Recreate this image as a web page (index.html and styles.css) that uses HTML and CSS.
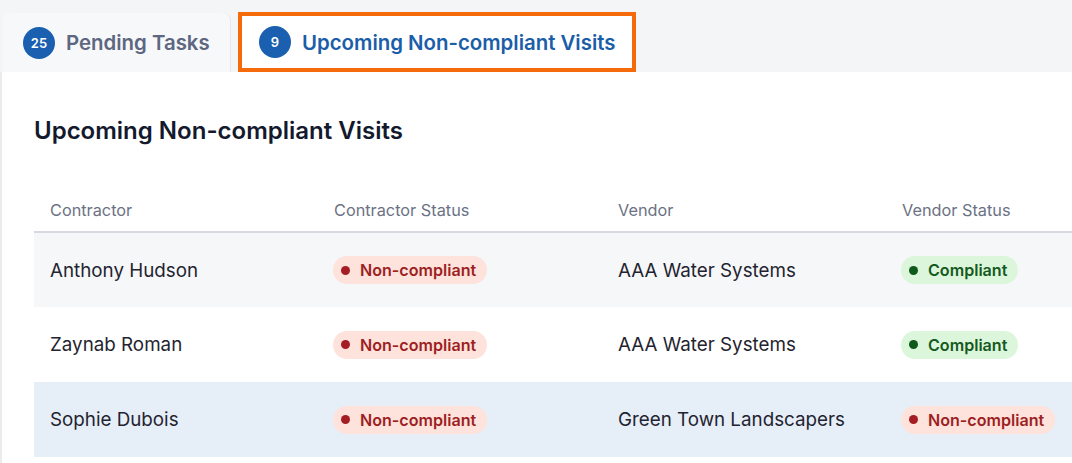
FILE: index.html
```html
<!DOCTYPE html>
<html>
<head>
<meta charset="utf-8">
<link rel="stylesheet" href="styles.css">
</head>
<body>
<div class="tabs">
  <div class="tab tab-inactive">
    <span class="badge">25</span>
    <span class="tab-label">Pending Tasks</span>
  </div>
  <div class="tab tab-active">
    <span class="badge">9</span>
    <span class="tab-label">Upcoming Non-compliant Visits</span>
  </div>
</div>
<div class="panel">
  <h1 class="title">Upcoming Non-compliant Visits</h1>
  <div class="grid-wrap">
  <table class="grid">
    <thead>
      <tr>
        <th>Contractor</th>
        <th>Contractor Status</th>
        <th>Vendor</th>
        <th>Vendor Status</th>
      </tr>
    </thead>
    <tbody>
      <tr class="row-striped">
        <td>Anthony Hudson</td>
        <td><span class="pill pill-bad"><span class="dot"></span>Non-compliant</span></td>
        <td>AAA Water Systems</td>
        <td><span class="pill pill-good"><span class="dot"></span>Compliant</span></td>
      </tr>
      <tr>
        <td>Zaynab Roman</td>
        <td><span class="pill pill-bad"><span class="dot"></span>Non-compliant</span></td>
        <td>AAA Water Systems</td>
        <td><span class="pill pill-good"><span class="dot"></span>Compliant</span></td>
      </tr>
      <tr class="row-hover">
        <td>Sophie Dubois</td>
        <td><span class="pill pill-bad"><span class="dot"></span>Non-compliant</span></td>
        <td>Green Town Landscapers</td>
        <td><span class="pill pill-bad"><span class="dot"></span>Non-compliant</span></td>
      </tr>
    </tbody>
  </table>
  </div>
</div>
</body>
</html>
```
FILE: styles.css
```css
* { box-sizing: border-box; }
html, body { margin: 0; padding: 0; }
body {
  background: #f4f5f7;
  font-family: Inter, "Noto Sans", "Liberation Sans", sans-serif;
  width: 1072px;
  height: 463px;
  overflow: hidden;
}
.tabs {
  display: flex;
  align-items: flex-end;
  height: 72px;
}
.tab {
  display: flex;
  align-items: center;
  gap: 11px;
}
.tab-inactive {
  margin-left: 3px;
  width: 228px;
  height: 59px;
  padding-left: 20px;
  background: #f7f8fa;
  border-radius: 8px 8px 0 0;
  border-right: 1px solid #e6e8ec;
}
.tab-active {
  margin-left: 7px;
  width: 398px;
  height: 60px;
  padding-left: 17px;
  background: #ffffff;
  border: 4px solid #f56a0a;
}
.badge {
  width: 32px;
  height: 32px;
  border-radius: 50%;
  background: #1b5fb0;
  color: #ffffff;
  font-size: 13px;
  font-weight: 600;
  display: flex;
  align-items: center;
  justify-content: center;
  flex: none;
}
.tab-label {
  font-size: 20.4px;
  font-weight: 600;
}
.tab-inactive .tab-label { color: #5d6780; }
.tab-active .tab-label { color: #1a5ea9; }
.panel {
  background: #ffffff;
  border-left: 2px solid #e9ebef;
  height: 391px;
  padding-left: 32px;
  padding-top: 44px;
}
.title {
  margin: 0;
  font-size: 24px;
  line-height: 30px;
  font-weight: 600;
  color: #141a2e;
}
.grid-wrap {
  margin-top: 42px;
  overflow: hidden;
}
.grid {
  border-collapse: collapse;
  width: 1136px;
  table-layout: fixed;
}
.grid th {
  width: 284px;
  text-align: left;
  font-size: 16.3px;
  font-weight: 400;
  color: #6b7284;
  padding: 0 16px;
  height: 44px;
  border-bottom: 2px solid #d6d9e0;
  vertical-align: middle;
}
.grid td {
  height: 75px;
  padding: 0 16px;
  font-size: 18.8px;
  color: #1f2430;
  vertical-align: middle;
}
.row-striped { background: #f6f7f9; }
.row-hover { background: #e6eef8; }
.pill {
  display: inline-flex;
  align-items: center;
  gap: 10px;
  height: 28px;
  padding: 0 11px 0 8px;
  border-radius: 14px;
  font-size: 16.1px;
  font-weight: 600;
  margin-left: -1px;
}
.dot {
  width: 9px;
  height: 9px;
  border-radius: 50%;
  flex: none;
}
.pill-bad { background: #fde3dc; color: #9e1f23; }
.pill-bad .dot { background: #a51d24; }
.pill-good { background: #dcf6dc; color: #145a20; }
.pill-good .dot { background: #0e5a1a; }
```
